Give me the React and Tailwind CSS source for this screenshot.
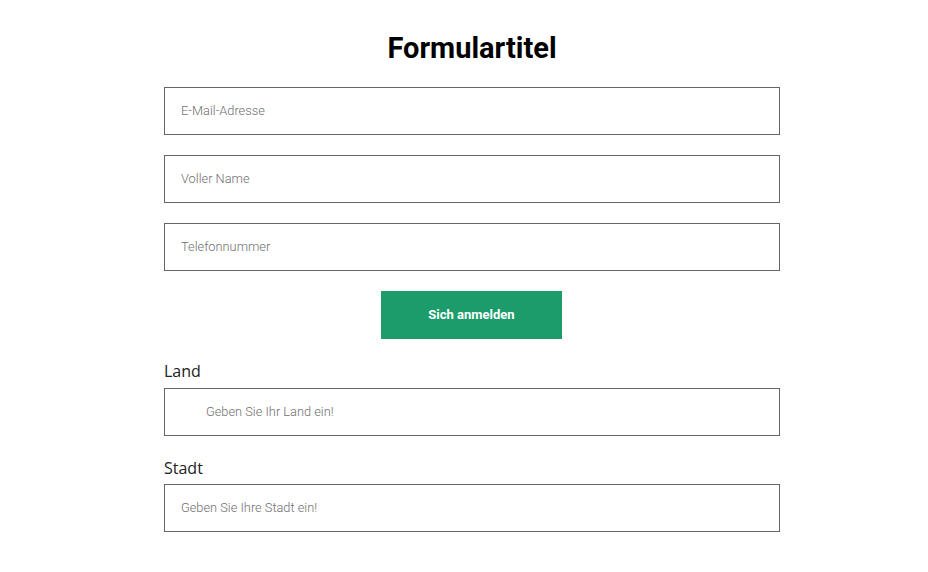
export default function App() {
  const input = "h-[48px] w-full border border-[#666666] bg-white flex items-center text-[12.8px] font-light text-[#6f6f6f]";
  return (
    <div className="min-h-[572px] w-[928px] bg-white pl-[164px]" style={{ fontFamily: "Roboto, sans-serif" }}>
      <div className="w-[616px] flex flex-col">
        <h1 className="mt-[30px] h-[36px] text-center text-[29px] leading-[36px] font-bold text-black">Formulartitel</h1>
        <div className="mt-[21px] flex flex-col gap-[20px]">
          <div className={input + " pl-[16px]"}>E-Mail-Adresse</div>
          <div className={input + " pl-[16px]"}>Voller Name</div>
          <div className={input + " pl-[16px]"}>Telefonnummer</div>
        </div>
        <div className="mt-[20px] flex">
          <button className="ml-[217px] h-[48px] w-[181px] bg-[#1b9c6a] text-white text-[13px] font-bold">Sich anmelden</button>
        </div>
        <label className="mt-[21px] text-[16px] leading-[22px] text-[#222]" style={{ fontFamily: '"Open Sans", sans-serif' }}>Land</label>
        <div className={input + " mt-[6px] pl-[41px]"}>Geben Sie Ihr Land ein!</div>
        <label className="mt-[21px] text-[16px] leading-[22px] text-[#222]" style={{ fontFamily: '"Open Sans", sans-serif' }}>Stadt</label>
        <div className={input + " mt-[5px] pl-[16px]"}>Geben Sie Ihre Stadt ein!</div>
      </div>
    </div>
  );
}
